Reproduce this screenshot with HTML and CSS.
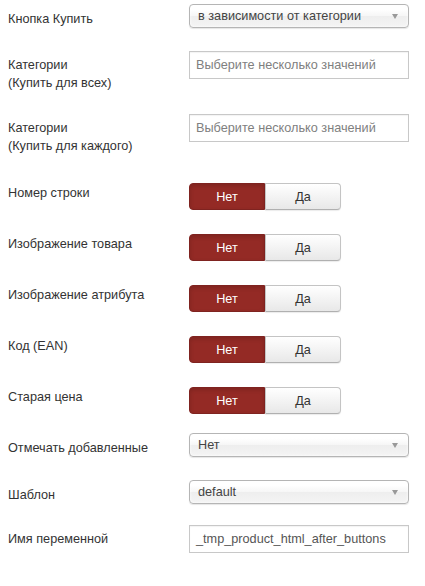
FILE: index.html
```html
<!DOCTYPE html>
<html lang="ru">
<head>
<meta charset="utf-8">
<link rel="stylesheet" href="styles.css">
</head>
<body>
<div class="form">
  <div class="row row-select">
    <div class="label">Кнопка Купить</div>
    <div class="select"><span>в зависимости от категории</span><i class="arrow"></i></div>
  </div>
  <div class="row row-input">
    <div class="label">Категории<br>(Купить для всех)</div>
    <div class="input placeholder">Выберите несколько значений</div>
  </div>
  <div class="row row-input row-tall">
    <div class="label">Категории<br>(Купить для каждого)</div>
    <div class="input placeholder">Выберите несколько значений</div>
  </div>
  <div class="row row-toggle">
    <div class="label">Номер строки</div>
    <div class="toggle"><span class="btn active">Нет</span><span class="btn">Да</span></div>
  </div>
  <div class="row row-toggle">
    <div class="label">Изображение товара</div>
    <div class="toggle"><span class="btn active">Нет</span><span class="btn">Да</span></div>
  </div>
  <div class="row row-toggle">
    <div class="label">Изображение атрибута</div>
    <div class="toggle"><span class="btn active">Нет</span><span class="btn">Да</span></div>
  </div>
  <div class="row row-toggle">
    <div class="label">Код (EAN)</div>
    <div class="toggle"><span class="btn active">Нет</span><span class="btn">Да</span></div>
  </div>
  <div class="row row-toggle row-last-toggle">
    <div class="label">Старая цена</div>
    <div class="toggle"><span class="btn active">Нет</span><span class="btn">Да</span></div>
  </div>
  <div class="row row-select">
    <div class="label">Отмечать добавленные</div>
    <div class="select"><span>Нет</span><i class="arrow"></i></div>
  </div>
  <div class="row row-select row-tight">
    <div class="label">Шаблон</div>
    <div class="select"><span>default</span><i class="arrow"></i></div>
  </div>
  <div class="row row-input">
    <div class="label">Имя переменной</div>
    <div class="input value">_tmp_product_html_after_buttons</div>
  </div>
</div>
</body>
</html>
```
FILE: styles.css
```css
html, body {
  margin: 0;
  padding: 0;
  background: #fff;
}
body {
  font-family: "Liberation Sans", Arial, sans-serif;
  font-size: 12.7px;
  line-height: 18px;
  color: #333;
}
.form {
  padding: 4px 8px 0 8px;
}
.row {
  display: flex;
  align-items: flex-start;
  margin-bottom: 23px;
}
.label {
  width: 181px;
  flex: none;
  padding-top: 6px;
}
.row-input { margin-bottom: 22px; }
.row-input .label { padding-top: 5px; }
.row-toggle .label { padding-top: 1px; }
.row-tall { margin-bottom: 28px; }
.row-toggle { margin-bottom: 24px; }
.row-last-toggle { margin-bottom: 19px; }
.row-tight { margin-bottom: 21px; }

.select {
  box-sizing: border-box;
  width: 220px;
  height: 24px;
  border: 1px solid #b5b5b5;
  border-radius: 4px;
  background: linear-gradient(#ffffff 20%, #f6f6f6 50%, #eeeeee 52%, #f4f4f4 100%);
  box-shadow: 0 0 3px #fff inset, 0 1px 1px rgba(0,0,0,0.1);
  display: flex;
  align-items: center;
  justify-content: space-between;
  padding: 0 10px 0 8px;
  color: #444;
  line-height: 22px;
}
.arrow {
  width: 0;
  height: 0;
  border-left: 3.5px solid transparent;
  border-right: 3.5px solid transparent;
  border-top: 5px solid #999;
  margin-top: 1px;
}
.input {
  box-sizing: border-box;
  width: 220px;
  height: 28px;
  border: 1px solid #c8c8c8;
  padding: 0 6px;
  line-height: 26px;
  box-shadow: inset 0 1px 1px rgba(0,0,0,0.05);
  white-space: nowrap;
  overflow: hidden;
}
.placeholder { color: #808080; }
.value { color: #555; }

.toggle {
  display: flex;
  height: 27px;
}
.btn {
  box-sizing: border-box;
  width: 76px;
  height: 27px;
  display: flex;
  align-items: center;
  justify-content: center;
  border: 1px solid #c4c4c4;
  border-bottom-color: #b0b0b0;
  background: linear-gradient(#ffffff, #e8e8e8);
  color: #333;
  border-radius: 0 4px 4px 0;
  box-shadow: 0 1px 1px rgba(0,0,0,0.08);
}
.btn.active {
  background: #942a25;
  border-color: #7f2320;
  color: #fff;
  border-radius: 4px 0 0 4px;
  box-shadow: inset 0 2px 4px rgba(0,0,0,0.15);
}
```
